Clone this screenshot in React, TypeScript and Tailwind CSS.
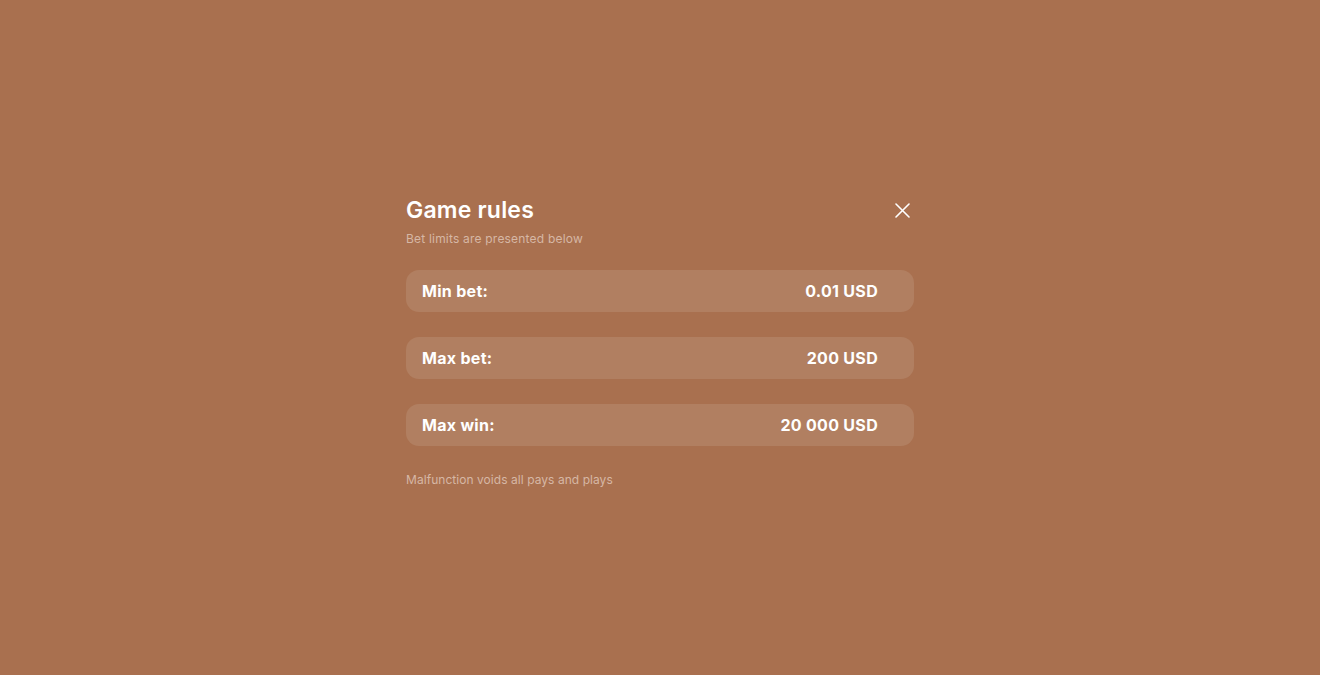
import React from "react";

const rows = [
  { label: "Min bet:", value: "0.01 USD" },
  { label: "Max bet:", value: "200 USD" },
  { label: "Max win:", value: "20 000 USD" },
];

export default function App() {
  return (
    <div
      className="w-[1320px] h-[675px] bg-[#a9704f] flex justify-center"
      style={{ fontFamily: "Inter, 'Noto Sans', sans-serif" }}
    >
      <div className="w-[508px] pt-[196px]">
        <div className="flex items-center justify-between h-[28px]">
          <h1 className="text-[23px] font-semibold text-white leading-[28px] tracking-[0.2px]">Game rules</h1>
          <button className="w-[24px] h-[24px] flex items-center justify-center">
            <svg width="15" height="15" viewBox="0 0 15 15" fill="none">
              <path d="M1 1L14 14M14 1L1 14" stroke="#ffffff" strokeWidth="1.6" strokeLinecap="round" />
            </svg>
          </button>
        </div>
        <p className="text-[12px] text-[#d6b7a5] mt-[7px] leading-[16px] tracking-[0.2px]">Bet limits are presented below</p>
        <div className="mt-[23px] flex flex-col gap-[25px]">
          {rows.map((r) => (
            <div
              key={r.label}
              className="h-[42px] rounded-[13px] bg-[#b17f61] flex items-center justify-between pl-[16px] pr-[36px]"
            >
              <span className="text-[16px] font-bold text-white tracking-[0.3px]">{r.label}</span>
              <span className="text-[16px] font-bold text-white tracking-[0.3px]">{r.value}</span>
            </div>
          ))}
        </div>
        <p className="text-[12px] text-[#d6b7a5] mt-[26px] leading-[16px] tracking-[0.05px]">Malfunction voids all pays and plays</p>
      </div>
    </div>
  );
}
